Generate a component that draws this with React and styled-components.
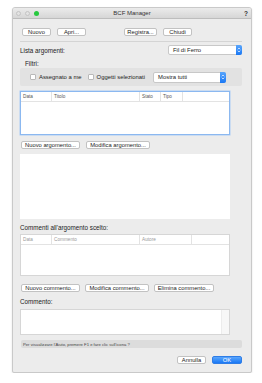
import React from 'react';
import styled, { createGlobalStyle } from 'styled-components';

const Global = createGlobalStyle`
  html, body { margin: 0; padding: 0; background: #fff; }
  body { font-family: "Liberation Sans", Arial, sans-serif; color: #222; }
`;

const Window = styled.div`
  box-sizing: border-box;
  margin: 7px 0 0 12px;
  width: 240px;
  height: 366px;
  background: #ececec;
  border: 1px solid #c9c9c9;
  border-radius: 3px 3px 2px 2px;
  box-shadow: 0 1px 2px rgba(0, 0, 0, 0.12);
  display: flex;
  flex-direction: column;
  overflow: hidden;
`;

const TitleBar = styled.div`
  height: 10px;
  flex: none;
  display: flex;
  align-items: center;
  position: relative;
  background: linear-gradient(#ebebeb, #d6d6d6);
  border-bottom: 1px solid #bdbdbd;
  font-size: 6px;
  color: #333;
`;

const Lights = styled.div`
  display: flex;
  gap: 4px;
  padding-left: 3px;
`;

const Light = styled.span`
  width: 5px;
  height: 5px;
  border-radius: 50%;
  background: ${p => p.$c};
  border: ${p => (p.$c === '#27c93f' ? 'none' : '1px solid #c4c4c4')};
  box-sizing: border-box;
`;

const Title = styled.div`
  position: absolute;
  left: 0;
  right: 0;
  text-align: center;
`;

const Help = styled.div`
  position: absolute;
  right: 3px;
  font-weight: bold;
  font-size: 6.5px;
`;

const Body = styled.div`
  flex: 1;
  display: flex;
  flex-direction: column;
  padding: 0 9px 0 7px;
`;

const Row = styled.div`
  display: flex;
  align-items: center;
  gap: ${p => p.$gap || 5}px;
  margin-top: ${p => p.$mt || 0}px;
  padding-left: ${p => p.$pl || 0}px;
`;

const Button = styled.div`
  box-sizing: border-box;
  height: 8px;
  width: ${p => p.$w}px;
  margin-left: ${p => p.$ml || 0}px;
  display: flex;
  align-items: center;
  justify-content: center;
  background: ${p => (p.$primary ? 'linear-gradient(#5aa6fc, #1a78f5)' : '#fff')};
  color: ${p => (p.$primary ? '#fff' : '#222')};
  border: 1px solid ${p => (p.$primary ? '#2f7de6' : '#c2c2c2')};
  border-radius: 2px;
  font-size: 5.8px;
  white-space: nowrap;
`;

const Separator = styled.div`
  height: 1px;
  background: #d4d4d4;
  margin-top: 5px;
`;

const Label = styled.div`
  font-size: 6.3px;
  margin-top: ${p => p.$mt || 0}px;
  padding-left: ${p => p.$pl || 0}px;
  flex: ${p => (p.$grow ? 1 : 'none')};
`;

const Select = styled.div`
  box-sizing: border-box;
  width: ${p => p.$w}px;
  height: ${p => p.$h}px;
  background: #fff;
  border: 1px solid #c8c8c8;
  border-radius: 2px;
  display: flex;
  align-items: center;
  font-size: 5.9px;
  padding-left: 4px;
  margin-left: ${p => p.$ml || 0}px;
`;

const SelectText = styled.span`
  flex: 1;
`;

const Stepper = styled.span`
  width: 6px;
  align-self: stretch;
  margin: -1px -1px -1px 0;
  background: linear-gradient(#5aa6fc, #1a78f5);
  border-radius: 0 2px 2px 0;
  display: flex;
  align-items: center;
  justify-content: center;
`;

const Arrows = () => (
  <svg width="4" height="6" viewBox="0 0 4 6">
    <path d="M0.8 2.3 L2 1 L3.2 2.3 M0.8 3.7 L2 5 L3.2 3.7" stroke="#fff" strokeWidth="0.7" fill="none" />
  </svg>
);

const FilterBox = styled.div`
  margin-top: 1px;
  height: 18px;
  width: 222px;
  box-sizing: border-box;
  background: #e2e2e2;
  border-radius: 2px;
  display: flex;
  align-items: center;
  padding-left: 10px;
  font-size: 5.9px;
`;

const Check = styled.span`
  box-sizing: border-box;
  width: 6px;
  height: 6px;
  background: #fff;
  border: 1px solid #b9b9b9;
  border-radius: 1px;
  margin-right: 3px;
  flex: none;
`;

const CheckItem = styled.div`
  display: flex;
  align-items: center;
  margin-right: ${p => p.$mr}px;
  white-space: nowrap;
`;

const Table = styled.div`
  box-sizing: border-box;
  width: 210px;
  height: ${p => p.$h}px;
  margin-top: ${p => p.$mt}px;
  background: #fff;
  border: 1px solid ${p => (p.$focus ? '#8bb8f0' : '#d6d6d6')};
  box-shadow: ${p => (p.$focus ? '0 0 0 0.5px #a9cbf5' : 'none')};
  display: flex;
  flex-direction: column;
`;

const HeaderRow = styled.div`
  display: flex;
  height: 9px;
  border-bottom: 1px solid #e3e3e3;
  font-size: 4.7px;
  color: ${p => (p.$muted ? '#999' : '#555')};
`;

const HeaderCell = styled.div`
  width: ${p => (p.$w ? `${p.$w}px` : 'auto')};
  flex: ${p => (p.$w ? 'none' : 1)};
  box-sizing: border-box;
  padding-left: 2px;
  display: flex;
  align-items: center;
  border-right: ${p => (p.$last ? 'none' : '1px solid #e3e3e3')};
`;

const Panel = styled.div`
  box-sizing: border-box;
  width: 210px;
  height: ${p => p.$h}px;
  margin-top: ${p => p.$mt}px;
  background: #fff;
  border: ${p => (p.$border ? '1px solid #d6d6d6' : 'none')};
  display: flex;
  justify-content: flex-end;
`;

const ScrollGutter = styled.div`
  width: 7px;
  background: #f7f7f7;
  border-left: 1px solid #ececec;
`;

const Status = styled.div`
  margin-top: 5px;
  margin-left: 1px;
  width: 221px;
  height: 8px;
  background: #dcdcdc;
  border-radius: 2px;
  font-size: 4.2px;
  color: #444;
  display: flex;
  align-items: center;
  padding-left: 2px;
  box-sizing: border-box;
  white-space: nowrap;
`;

const Footer = styled.div`
  display: flex;
  justify-content: flex-end;
  gap: 6px;
  margin-top: 8px;
  width: 222px;
`;

const topicCols = [
  { t: 'Data', w: 31 },
  { t: 'Titolo', w: 88 },
  { t: 'Stato', w: 21 },
  { t: 'Tipo', w: 22 },
  { t: '', last: true },
];

const commentCols = [
  { t: 'Data', w: 31 },
  { t: 'Commento', w: 88 },
  { t: 'Autore', w: 52 },
  { t: '', last: true },
];

const Header = ({ cols, muted }) => (
  <HeaderRow $muted={muted}>
    {cols.map((c, i) => (
      <HeaderCell key={i} $w={c.w} $last={c.last}>{c.t}</HeaderCell>
    ))}
  </HeaderRow>
);

export default function App() {
  return (
    <>
      <Global />
      <Window>
        <TitleBar>
          <Lights>
            <Light $c="#e3e3e3" />
            <Light $c="#e3e3e3" />
            <Light $c="#27c93f" />
          </Lights>
          <Title>BCF Manager</Title>
          <Help>?</Help>
        </TitleBar>
        <Body>
          <Row $mt={9} $pl={2} $gap={6}>
            <Button $w={29}>Nuovo</Button>
            <Button $w={29}>Apri...</Button>
            <Button $w={33} $ml={32}>Registra...</Button>
            <Button $w={29}>Chiudi</Button>
          </Row>
          <Separator />
          <Row $mt={3}>
            <Label $grow>Lista argomenti:</Label>
            <Select $w={74} $h={10}>
              <SelectText>Fil di Ferro</SelectText>
              <Stepper><Arrows /></Stepper>
            </Select>
          </Row>
          <Label $mt={5} $pl={5}>Filtri:</Label>
          <FilterBox>
            <CheckItem $mr={6}><Check />Assegnato a me</CheckItem>
            <CheckItem $mr={8}><Check />Oggetti selezionati</CheckItem>
            <Select $w={73} $h={11}>
              <SelectText>Mostra tutti</SelectText>
              <Stepper><Arrows /></Stepper>
            </Select>
          </FilterBox>
          <Table $h={44} $mt={5} $focus>
            <Header cols={topicCols} />
          </Table>
          <Row $mt={6} $pl={1} $gap={6}>
            <Button $w={59}>Nuovo argomento...</Button>
            <Button $w={64}>Modifica argomento...</Button>
          </Row>
          <Panel $h={65} $mt={5} />
          <Label $mt={5}>Commenti all'argomento scelto:</Label>
          <Table $h={42} $mt={3}>
            <Header cols={commentCols} muted />
          </Table>
          <Row $mt={8} $pl={1} $gap={5}>
            <Button $w={59}>Nuovo commento...</Button>
            <Button $w={64}>Modifica commento...</Button>
            <Button $w={60}>Elimina commento...</Button>
          </Row>
          <Label $mt={6}>Commento:</Label>
          <Panel $h={26} $mt={4} $border>
            <ScrollGutter />
          </Panel>
          <Status>Per visualizzare l'Aiuto, premere F1 e fare clic sull'icona ?</Status>
          <Footer>
            <Button $w={29}>Annulla</Button>
            <Button $w={30} $primary>OK</Button>
          </Footer>
        </Body>
      </Window>
    </>
  );
}
